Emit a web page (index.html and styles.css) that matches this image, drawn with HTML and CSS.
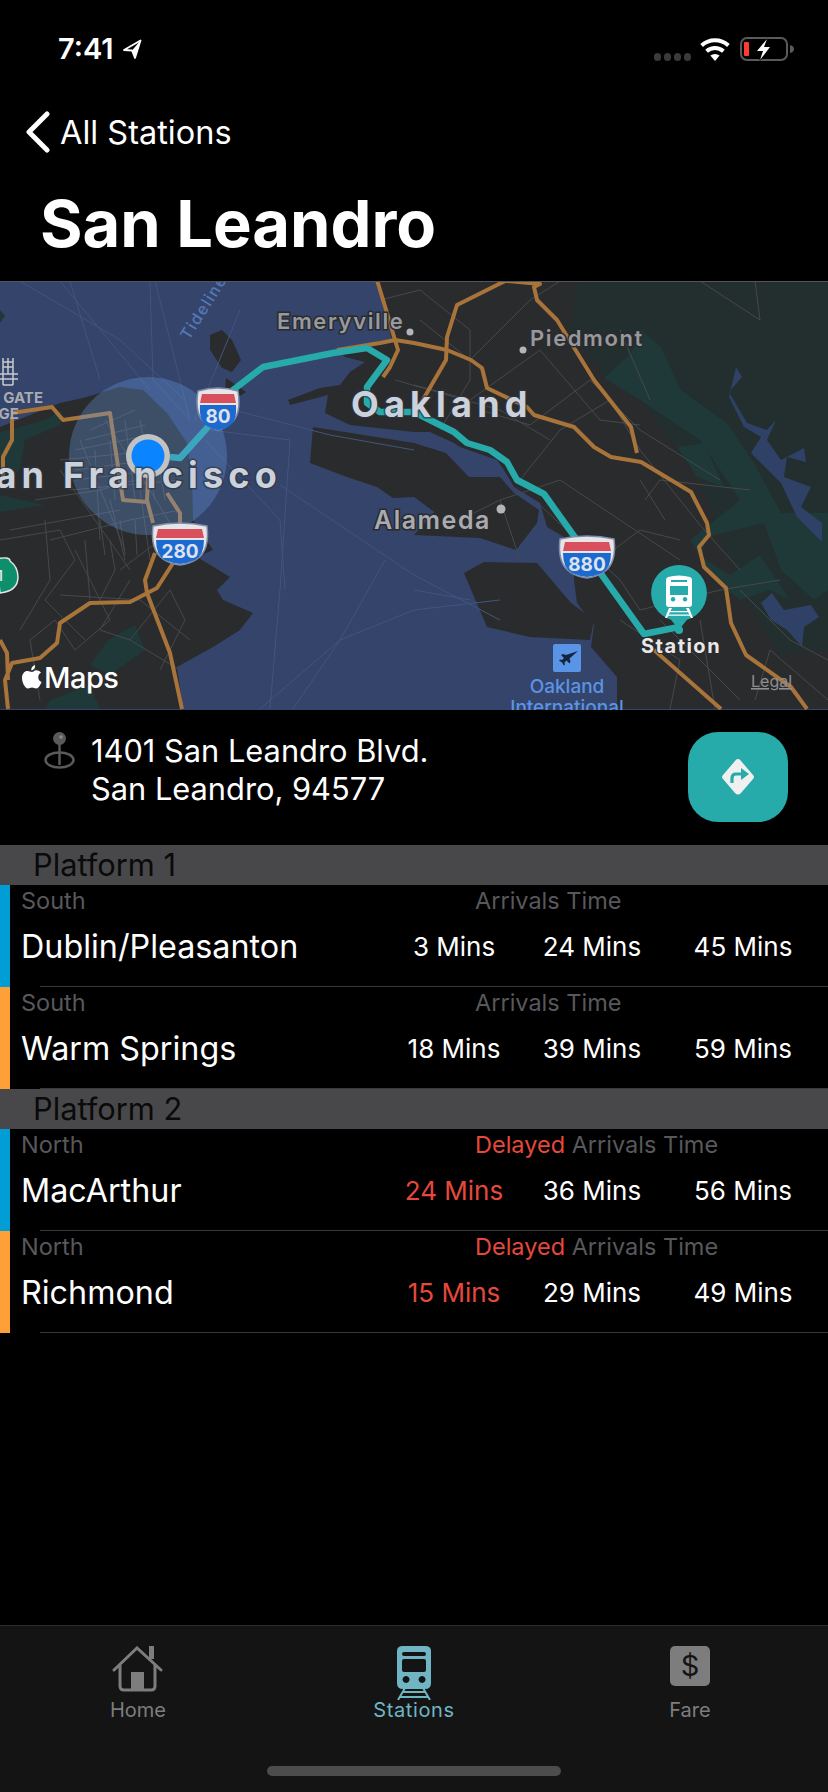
FILE: index.html
```html
<!DOCTYPE html>
<html lang="en">
<head>
<meta charset="utf-8">
<title>San Leandro</title>
<link rel="stylesheet" href="styles.css">
</head>
<body>
<div class="screen">
  <header class="status">
    <div class="status-left">
      <span class="clock">7:41</span>
      <svg class="loc" viewBox="0 0 20 20"><path d="M18.500 1.500 2 11l8 .5L13 19z" fill="none" stroke="#fff" stroke-width="1.800" stroke-linejoin="round"/><path d="M18.500 1.500 10 11.500 13 19z" fill="#fff"/></svg>
    </div>
    <div class="status-right">
      <div class="dots"><i></i><i></i><i></i><i></i></div>
      <svg class="wifi" viewBox="0 0 32 24"><path d="M16 24l-4.600-5.400a7 7 0 0 1 9.200 0z" fill="#fff"/><path d="M7.600 14.200a12.600 12.600 0 0 1 16.800 0M2.600 8.400a20 20 0 0 1 26.800 0" fill="none" stroke="#fff" stroke-width="4"/></svg>
      <svg class="battery" viewBox="0 0 55 24"><rect x="1" y="1" width="46" height="22" rx="6" fill="none" stroke="#5a5a5e" stroke-width="2"/><rect x="4" y="5" width="5" height="14" rx="1" fill="#ff3b30"/><path d="M50 8q4 1 4 4t-4 4z" fill="#5a5a5e"/><path d="M27 2 17 14h6l-3 9 10-13h-6z" fill="#fff" stroke="#000" stroke-width="1.500" paint-order="stroke"/></svg>
    </div>
  </header>

  <nav class="back">
    <svg class="chevron" viewBox="0 0 26 42"><path d="M22 3 4 21l18 18" fill="none" stroke="#fff" stroke-width="5" stroke-linecap="round" stroke-linejoin="round"/></svg>
    <span>All Stations</span>
  </nav>
  <h1 class="title">San Leandro</h1>

  <div class="map">
    <svg viewBox="0 281 828 429" width="828" height="429">
      <rect class="water" x="0" y="281" width="828" height="429"/>
      <!-- SF peninsula -->
      <path class="land" d="M0 427 60 403 83 398 110 390 120 387 143 390 167 413 187 443 192 480 193 520 213 550 197 557 230 577 217 590 223 600 253 613 240 630 213 647 177 667 183 709 0 709z"/>
      <!-- Treasure Island bits -->
      <path class="land" d="M210 335 222 330 232 340 241 360 232 372 222 368 210 350z"/>
      <path class="land" d="M226 378 246 392 240 396 225 392z"/>
      <!-- East bay mainland -->
      <path class="land" d="M377 281 392 340 337 350 345 357 365 362 350 372 340 385 320 388 288 400 290 405 328 395 325 413 350 425 414 432 430 432 454 443 460 447 497 460 504 470 514 487 540 503 547 527 574 543 574 580 577 603 594 625 591 647 617 677 617 709 828 709 828 281z"/>
      <!-- Alameda -->
      <path class="land" d="M313 427 414 443 446 453 469 477 500 477 514 493 539 510 537 523 516 550 480 538 414 535 434 512 414 497 393 498 377 487 347 477 310 463z"/>
      <!-- Airport -->
      <path class="land" d="M464 573 484 562 537 563 571 603 594 620 590 640 530 637 487 627z"/>
      <path class="water" d="M414 497 434 512 414 535 405 520z"/>
      <!-- East bay parks -->
      <path class="parkdark" d="M577 281 828 281 828 650 780 655 740 590 700 480 640 400 600 370 570 330z"/>
      <path class="park" d="M604 378 631 353 641 330 661 347 681 390 727 423 754 463 781 513 828 513 828 590 814 600 781 570 764 523 707 537 701 557 730 575 760 555 790 600 770 590 740 600 715 580 690 540 740 500 700 440 640 400z"/>
      <path class="park" d="M677 447 704 443 724 487 697 477z"/>
      <path class="park" d="M0 432 45 420 62 410 60 425 25 440 20 470 0 485z"/>
      <path class="park" d="M0 495 45 505 0 512z"/>
      <path class="park" d="M108 640 135 625 145 650 110 675 90 665z"/>
      <path class="park" d="M50 700 90 685 100 709 45 709z"/>
      <path class="park" d="M0 310 5 316 0 323z"/>
      <!-- East creek -->
      <path class="creek" d="M736 367 742 377 729 392 747 423 767 430 776 420 767 440 781 460 804 448 806 462 787 457 784 477 811 487 801 507 822 523 822 542 797 517 781 483 751 453 761 437 744 427 729 397z"/>
      <path class="creek" d="M761 603 772 593 784 610 811 605 819 617 804 627 802 647 787 630 771 620z"/>
      <!-- sea lines -->
      <g class="sea">
        <path d="M20 281 120 340 185 400M60 281 150 390M70 281 100 380M150 281 153 380 190 420M155 281 190 420M240 310 195 420M195 400 330 435 414 450M210 430 290 440 280 590 270 709M205 440 280 520 285 590M280 485 414 575 500 620M385 560 340 640 260 709M340 640 414 610 500 600M293 709 340 640M414 590 470 600"/>
      </g>
      <!-- local roads -->
      <g class="street">
        <path d="M35 500 100 490 170 470M10 530 120 510M50 540 130 520 180 510M105 420 150 490 180 540M80 440 125 550M60 470 130 570M0 540 60 530 75 560 45 600 85 640M45 520 50 580 20 630M75 550 110 620 75 650 55 620 30 640 40 700M130 580 100 630 130 640 170 590 185 620 160 670M120 570 160 540M60 595 140 600 190 640M130 640 180 670M85 540 90 600M110 540 115 570 100 600M110 500 125 560M140 490 150 560M95 450 100 540M60 460 160 450M70 490 180 480"/>
        <path d="M75 470 165 458M75 480 175 468M75 450 150 435M85 440 145 425M90 430 135 410M110 440 115 500M125 420 135 500M140 420 155 500M155 440 165 500M120 520 125 555M135 520 137 555M100 520 105 555"/>
        <path d="M380 300 420 290 470 330 470 380 440 430M420 320 470 360 530 300 560 281M414 385 470 400 540 350 600 420 640 425M480 410 530 425 590 380 640 430 720 480M520 480 560 430 610 400 640 450 700 525 740 570M460 520 500 500 560 480 620 520 680 560M500 500 520 560M540 505 620 580 640 610M600 560 640 530 680 540M640 610 720 590 780 580M620 620 680 660 670 709M660 620 740 700M700 620 715 709M740 590 790 640 828 660M645 500 660 480 750 490M755 700 770 650 828 700M700 281 760 320 755 281M620 330 650 400M640 480 665 520M395 380 500 410 550 440"/>
      </g>
      <!-- highways -->
      <g class="road">
        <path d="M12 413 52 407 63 420 110 413 123 500 147 502 148 477M147 500 153 523M167 493 180 513 180 523"/>
        <path d="M12 417 12 440 3 457 3 480"/>
        <path d="M155 553 145 580 147 593 170 653 182 709M173 563 157 588 130 602 90 603 60 623 57 643 40 658 12 663 5 680 8 709M0 640 7 653 8 680"/>
        <path d="M377 280 387 313 395 340 398 350 390 367 383 377M337 350 380 343 395 340 414 343 447 350 471 360 482 368 487 388 527 407 534 415 574 427 594 447 611 457 641 462 691 492 707 523 709 535 699 547 704 567 726 588 731 623 746 655 791 687 807 709"/>
        <path d="M507 280 457 305 447 337 446 360 417 410M507 281 540 284 534 287 537 300 557 320 594 380 631 427 637 453M654 650 721 709"/>
      </g>
      <!-- route -->
      <path class="route" d="M170 457 180 458 207 428 233 390 263 367 333 353 367 348 387 360 367 387 367 403 380 412 414 412 454 432 467 443 490 450 507 462 517 480 544 494 644 634 679 627"/>
      <!-- user location -->
      <circle class="halo" cx="148" cy="456" r="79"/>
      <circle class="dot-ring" cx="148" cy="456" r="22"/>
      <circle class="dot" cx="148" cy="456" r="16.500"/>

      <!-- pin -->
      <path class="pin" d="M679 565a28 28 0 0 1 8 54.800l-8 10-8-10A28 28 0 0 1 679 565z"/>
      <circle class="pin" cx="679" cy="630" r="4"/>
      <g fill="#fff">
        <path fill-rule="evenodd" d="M668 577q11-3 22 0 2 1 2 3v24q0 3-3 3h-20q-3 0-3-3v-24q0-2 2-3zm3 3v2h16v-2zm-1 6v9h18v-9zm3 11a2.300 2.300 0 1 0 .1 0zm12 0a2.300 2.300 0 1 0 .1 0z"/>
        <path d="M669 608h3l-5 10h-2zm17 0h3l4 10h-2zM669 611h20v1.300h-20zm-2 3.500h24v1.300h-24z"/>
      </g>

      <!-- airport -->
      <rect class="airport" x="553" y="644" width="28" height="28" rx="2"/>
      <path d="M575 650 563 654l-3-1-2 1 3 3-2 2-2-.5-1 1 3 2 2 3 1-1-.5-2 2-2 3 3 1-2-1-3z" fill="#16253e" transform="translate(3 1)"/>

      <!-- shields -->
      <g>
        <path class="sh-edge" d="M198 391q20-6 40 0 4 24-8 33-6 5-12 6-6-1-12-6-12-9-8-33z"/>
        <path class="sh-red" d="M202 394h32l2 9h-36z"/>
        <path class="sh-blue" d="M200 405h36q1 17-7 21-5 3-11 4-6-1-11-4-8-4-7-21z"/>
        <text class="sh-txt" x="218" y="423" text-anchor="middle">80</text>
      </g>
      <g>
        <path class="sh-edge" d="M153 526q27-6 54 0 3 24-10 33-8 5-17 6-9-1-17-6-13-9-10-33z"/>
        <path class="sh-red" d="M158 529h44l2 9h-48z"/>
        <path class="sh-blue" d="M156 540h48q0 15-9 20-7 3-15 4-8-1-15-4-9-5-9-20z"/>
        <text class="sh-txt" x="180" y="558" text-anchor="middle">280</text>
      </g>
      <g>
        <path class="sh-edge" d="M560 539q27-6 54 0 3 24-10 33-8 5-17 6-9-1-17-6-13-9-10-33z"/>
        <path class="sh-red" d="M565 542h44l2 9h-48z"/>
        <path class="sh-blue" d="M563 553h48q0 15-9 20-7 3-15 4-8-1-15-4-9-5-9-20z"/>
        <text class="sh-txt" x="587" y="571" text-anchor="middle">880</text>
      </g>
      <path class="sh-green" d="M-4 559q14-3 14 2 8 6 8 16 0 14-18 16z"/>
      <text class="sh-gt" x="-3" y="581">1</text>

      <!-- Golden Gate -->
      <g class="ggb">
        <path d="M3 358v27M13 358v27M0 374h18M0 379h18M3 362h10M3 367h10M8 358v16M3 385h10"/>
      </g>

      <!-- labels -->
      <text class="lbl-sm" x="277" y="329">Emeryville</text>
      <text class="lbl-sm" x="530" y="346">Piedmont</text>
      <text class="lbl-sm lbl-ala" x="374" y="529">Alameda</text>
      <circle class="poi" cx="410" cy="332" r="3.500"/>
      <circle class="poi" cx="523" cy="350" r="3.500"/>
      <circle class="poi" cx="501" cy="509" r="4.500"/>
      <text class="lbl-big" x="351" y="417">Oakland</text>
      <text class="lbl-big" x="282" y="488" text-anchor="end">San Francisco</text>
      <text class="lbl-gate" x="43" y="403" text-anchor="end">GOLDEN GATE</text>
      <text class="lbl-gate" x="19" y="419" text-anchor="end">BRIDGE</text>
      <text class="lbl-tide" transform="translate(189 341) rotate(-58)">Tideline Ferry</text>
      <text class="lbl-station" x="641" y="653">Station</text>
      <text class="lbl-air" x="567" y="693" text-anchor="middle">Oakland</text>
      <text class="lbl-air" x="567" y="714" text-anchor="middle">International</text>
      <text class="lbl-legal" x="751" y="687">Legal</text>
      <path class="apple" d="M35 665c-2 .5-4 2.600-3.800 5.300 2.400.2 4.400-2.500 3.800-5.300zM32 672c-1.500 0-2.700-1-4.500-1-3 0-5.500 2.700-5.500 7 0 4.500 3 10.500 6 10.500 1.500 0 2.300-1 4-1s2.500 1 4 1c2.400 0 4.300-3.500 5.500-6.500-4-1.600-4.400-7.500-.5-9.300-1.300-1.800-3.200-2.500-4.800-2.500-1.800 0-3 1.800-4.200 1.800z"/>
      <text class="lbl-maps" x="44" y="688">Maps</text>
    </svg>
  </div>

  <section class="address">
    <svg class="addr-pin" viewBox="0 0 32 38"><ellipse cx="15.500" cy="28" rx="14" ry="7.500" fill="none" stroke="#5a5a5c" stroke-width="2.500"/><path d="M15.500 9v24" stroke="#5a5a5c" stroke-width="2.500"/><circle cx="15.500" cy="6.500" r="6.500" fill="#5a5a5c"/><circle cx="17" cy="5" r="1.800" fill="#8a8a8c"/></svg>
    <p class="addr-text">1401 San Leandro Blvd.<br>San Leandro, 94577</p>
    <button class="dir-btn" type="button" aria-label="Directions">
      <svg viewBox="0 0 36 38" width="36" height="38"><path d="M18 1q2 0 3 2l12 14q2 2 0 4L21 35q-3 3-6 0L3 21q-2-2 0-4L15 3q1-2 3-2z" fill="#f0f0f0"/><path d="M12 25v-5q0-4 4-4h7" fill="none" stroke="#27aaaa" stroke-width="3.200"/><path d="M21 10l8 6-8 6z" fill="#27aaaa"/></svg>
    </button>
  </section>

  <h2 class="platform">Platform 1</h2>
  <article class="row blue">
    <div class="row-head"><span class="dir">South</span><span class="arr">Arrivals Time</span></div>
    <div class="row-main"><span class="name">Dublin/Pleasanton</span><span class="t">3 Mins</span><span class="t">24 Mins</span><span class="t">45 Mins</span></div>
  </article>
  <article class="row orange">
    <div class="row-head"><span class="dir">South</span><span class="arr">Arrivals Time</span></div>
    <div class="row-main"><span class="name">Warm Springs</span><span class="t">18 Mins</span><span class="t">39 Mins</span><span class="t">59 Mins</span></div>
  </article>
  <h2 class="platform">Platform 2</h2>
  <article class="row blue">
    <div class="row-head"><span class="dir">North</span><span class="arr"><em>Delayed</em> Arrivals Time</span></div>
    <div class="row-main"><span class="name">MacArthur</span><span class="t late">24 Mins</span><span class="t">36 Mins</span><span class="t">56 Mins</span></div>
  </article>
  <article class="row orange">
    <div class="row-head"><span class="dir">North</span><span class="arr"><em>Delayed</em> Arrivals Time</span></div>
    <div class="row-main"><span class="name">Richmond</span><span class="t late">15 Mins</span><span class="t">29 Mins</span><span class="t">49 Mins</span></div>
  </article>

  <footer class="tabbar">
    <div class="tabs">
      <div class="tab">
        <svg class="ic-home" viewBox="0 0 52 46"><path d="M2 24 25 2l24 22" fill="none" stroke="#7d7d7d" stroke-width="3" stroke-linecap="round"/><path d="M37 0h5v13h-5z" fill="#7d7d7d"/><path d="M8 19v21q0 4 4 4h27q4 0 4-4V19" fill="none" stroke="#7d7d7d" stroke-width="3"/><path d="M19 26h13v18H19z" fill="#7d7d7d"/></svg>
        <span>Home</span>
      </div>
      <div class="tab active">
        <svg class="ic-train" viewBox="0 0 34 54"><path fill-rule="evenodd" fill="#6fb5c4" d="M6 0h22q6 0 6 5v32q0 6-6 6H6q-6 0-6-6V5q0-5 6-5zm1 6q-2 0-2 2v0q0 2 2 2h20q2 0 2-2v0q0-2-2-2zM7 13q-2 0-2 2v9q0 2 2 2h20q2 0 2-2v-9q0-2-2-2zm2 17a3.500 3.500 0 1 0 .1 0zm16 0a3.500 3.500 0 1 0 .1 0z"/><path d="M8 42 1 54M26 42l7 12M6 46h22M3 51h28" stroke="#6fb5c4" stroke-width="2" fill="none"/></svg>
        <span>Stations</span>
      </div>
      <div class="tab">
        <div class="ic-fare">$</div>
        <span>Fare</span>
      </div>
    </div>
    <div class="indicator"></div>
  </footer>
</div>
</body>
</html>
```
FILE: styles.css
```css
* { box-sizing: border-box; }
html, body { margin: 0; padding: 0; background: #000; }
body { font-family: Inter, "Liberation Sans", sans-serif; color: #fff; }
.screen { width: 828px; height: 1792px; display: flex; flex-direction: column; background: #000; overflow: hidden; }

.status { height: 92px; padding: 34px 33px 0 58px; display: flex; justify-content: space-between; align-items: flex-start; flex: none; }
.status-left { display: flex; align-items: center; gap: 8px; height: 30px; }
.clock { font-size: 29px; font-weight: 600; line-height: 30px; }
.loc { width: 20px; height: 20px; }
.status-right { display: flex; align-items: center; height: 30px; }
.dots { display: flex; gap: 2.500px; margin: 16px 8px 0 0; }
.dots i { width: 7.500px; height: 7.500px; border-radius: 50%; background: #3a3a3c; display: block; }
.wifi { width: 32px; height: 24px; margin-right: 9px; }
.battery { width: 55px; height: 24px; }

.back { height: 80px; padding-left: 25px; display: flex; align-items: center; gap: 9px; font-size: 32.500px; flex: none; }
.chevron { width: 26px; height: 42px; }
.title { margin: 0; padding: 0 0 0 40px; height: 109px; font-size: 65px; line-height: 104px; font-weight: 700; flex: none; }

.map { height: 429px; flex: none; border-top: 1px solid #55565a; overflow: hidden; }
.map svg { display: block; margin-top: -1px; font-family: Inter, "Liberation Sans", sans-serif; }
.water { fill: #34446a; }
.land { fill: #2a2b2d; }
.park { fill: #1f3838; }
.parkdark { fill: #232e2e; }
.creek { fill: #2f4166; }
.sea { fill: none; stroke: #42557f; stroke-width: 1; }
.street { fill: none; stroke: #47484a; stroke-width: 1; }
.road { fill: none; stroke: #a8743a; stroke-width: 4; stroke-linejoin: round; }
.route { fill: none; stroke: #27aaaa; stroke-width: 6.500; stroke-linejoin: round; }
.halo { fill: #6aa0f0; fill-opacity: .3; }
.dot-ring { fill: #c2c2c2; }
.dot { fill: #0a84ff; }
.pin { fill: #27aaaa; }
.airport { fill: #5a94e6; }
.sh-edge { fill: #e4e6ea; stroke: #7e8aa6; stroke-width: 1.500; }
.sh-red { fill: #d9505c; }
.sh-blue { fill: #1c69cf; }
.sh-txt { fill: #dde3ee; font-size: 19px; font-weight: 700; }
.sh-green { fill: #0c8f6a; stroke: #e4e6ea; stroke-width: 1.500; }
.sh-gt { fill: #dde3ee; font-size: 14px; font-weight: 600; }
.ggb { fill: none; stroke: #c8cacd; stroke-width: 1.500; }
.lbl-sm { fill: #97999e; font-size: 22px; font-weight: 600; letter-spacing: 1.600px; paint-order: stroke; stroke: #2a2b2d; stroke-width: 3px; }
.lbl-ala { fill: #a9abb0; font-size: 25px; letter-spacing: 1.500px; }
.lbl-big { fill: #ccd2dc; font-size: 36px; font-weight: 700; letter-spacing: 5.200px; paint-order: stroke; stroke: #2f3440; stroke-opacity: .7; stroke-width: 3px; }
.lbl-gate { fill: #a9abb0; font-size: 15px; font-weight: 700; }
.lbl-tide { fill: #5578b8; font-size: 16px; font-weight: 500; letter-spacing: 1.500px; }
.lbl-station { fill: #e8e8e8; font-size: 20px; font-weight: 700; letter-spacing: 1.500px; paint-order: stroke; stroke: #2a2b2d; stroke-width: 2px; }
.lbl-air { fill: #5a94e6; font-size: 19px; font-weight: 500; }
.lbl-legal { fill: #8e8e93; font-size: 16px; text-decoration: underline; }
.lbl-maps { fill: #fff; font-size: 29px; font-weight: 500; letter-spacing: -.5px; }
.apple { fill: #fff; }
.poi { fill: #b4b5b8; }

.address { height: 135px; flex: none; position: relative; display: flex; align-items: flex-start; padding: 22px 40px 0 44px; }
.addr-pin { width: 32px; height: 38px; flex: none; }
.addr-text { margin: 0 0 0 15px; font-size: 30.800px; line-height: 38px; flex: 1; }
.dir-btn { width: 100px; height: 90px; border: 0; border-radius: 30px; background: #27aaaa; display: flex; align-items: center; justify-content: center; padding: 0; }

.platform { margin: 0; height: 40px; flex: none; background: #48484a; color: #0a0a0a; font-size: 30.800px; line-height: 40px; font-weight: 400; padding-left: 33px; }
.row { height: 102px; flex: none; position: relative; padding-left: 21px; overflow: hidden; }
.row::before { content: ""; position: absolute; left: 0; top: 0; bottom: 0; width: 10px; }
.row::after { content: ""; position: absolute; left: 40px; right: 0; bottom: 0; height: 1px; background: #38383a; }
.blue::before { background: #009ed5; }
.orange::before { background: #ff9f38; }
.row-head { display: flex; height: 33px; font-size: 23.500px; line-height: 31px; color: #58585c; }
.dir { width: 454px; }
.arr em { font-style: normal; color: #e6483c; }
.row-main { display: flex; align-items: center; height: 56px; }
.name { width: 358px; font-size: 32.300px; }
.t { width: 150px; text-align: center; font-size: 26px; }
.t:nth-child(3) { margin-left: -12px; }
.t:nth-child(4) { margin-left: 1px; }
.late { color: #e6483c; }

.tabbar { margin-top: auto; height: 167px; flex: none; background: #141414; border-top: 1px solid #2c2c2e; position: relative; }
.tabs { display: flex; padding-top: 20px; }
.tab { width: 276px; display: flex; flex-direction: column; align-items: center; font-size: 20px; color: #7d7d7d; height: 80px; position: relative; }
.tab span { position: absolute; top: 52px; line-height: 24px; }
.active { color: #6fb5c4; letter-spacing: .6px; }
.ic-home { width: 52px; height: 46px; }
.ic-train { width: 34px; height: 54px; }
.ic-fare { width: 40px; height: 40px; border-radius: 5px; background: #7d7d7d; color: #141414; text-align: center; font-size: 29px; line-height: 40px; }
.indicator { position: absolute; left: 267px; top: 140px; width: 294px; height: 10px; border-radius: 5px; background: #4c4c4c; }
```
